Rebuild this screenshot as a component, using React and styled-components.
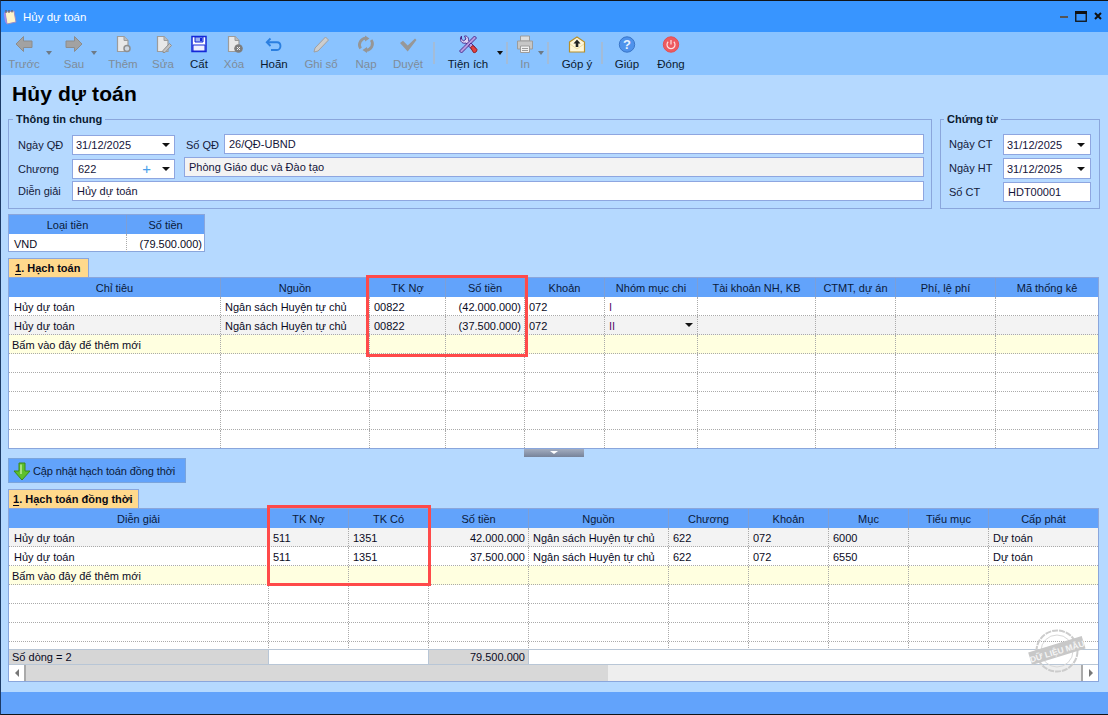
import React from 'react';
import styled, { createGlobalStyle } from 'styled-components';

const Global = createGlobalStyle`
  html, body { margin: 0; padding: 0; }
  body { font-family: "Liberation Sans", Arial, sans-serif; font-size: 11px; color: #0a0a1e; }
  * { box-sizing: border-box; }
`;

const Win = styled.div`
  width: 1108px; height: 715px; display: flex; flex-direction: column; overflow: hidden;
  background: #b5d9ff; border-top: 1px solid #101418; border-bottom: 1px solid #101418;
  border-left: 1px solid #1c3a66; position: relative;
`;
const TitleBar = styled.div`
  height: 31px; background: #3895ff; display: flex; align-items: center; padding-left: 2px; color: #fff; flex: none;
`;
const TitleText = styled.span` margin-left: 6px; font-size: 11.5px; margin-top: 1px; `;
const WinButtons = styled.div`
  margin-left: auto; display: flex; align-items: center; padding-right: 6px; gap: 7px; margin-top: -1px;
`;
const Toolbar = styled.div`
  height: 43px; background: #8ac3ff; display: flex; align-items: flex-start; padding-left: 3px; flex: none;
`;
const ToolBtn = styled.div`
  width: ${p => p.$w}px; margin-left: ${p => p.$ml || 0}px; flex: none; display: flex; flex-direction: column; align-items: center;
  padding-top: 3px; color: ${p => p.$off ? '#7f8c99' : '#0a1a30'}; white-space: nowrap;
`;
const ToolIcon = styled.div` width: 20px; height: 19px; display: flex; align-items: center; justify-content: center; `;
const ToolLabel = styled.div` font-size: 11.5px; line-height: 14px; margin-top: 3px; `;
const Caret = styled.div`
  flex: none; width: ${p => p.$w}px; margin-left: ${p => p.$ml || 0}px; height: 43px; display: flex; justify-content: center; padding-top: 19px;
  &::after { content: ""; width: 0; height: 0; border-left: 3.5px solid transparent; border-right: 3.5px solid transparent;
    border-top: 4px solid ${p => p.$off ? '#6e7a86' : '#111'}; }
`;
const Sep = styled.div`
  flex: none; width: 2px; height: 22px; margin-top: 10px; margin-left: ${p => p.$ml || 0}px; background: #a3bcd8;
`;
const Content = styled.div`
  flex: 1; display: flex; flex-direction: column; padding: 0 8px 0 7px; position: relative;
`;
const PageTitle = styled.h1`
  margin: 8px 0 0 4px; height: 29px; font-size: 21px; line-height: 22px; font-weight: 700; color: #000; letter-spacing: 0.1px;
`;
const Groups = styled.div` display: flex; gap: 8px; height: 97px; `;
const Group = styled.fieldset`
  margin: 0; padding: 8px 7px 0 ${p => p.$pl}px; border: 1px solid #8aa6dc; min-width: 0; height: 97px;
  ${p => p.$w ? `width:${p.$w}px; flex:none;` : 'flex:1;'}
  display: flex; flex-direction: column; gap: ${p => p.$gap}px;
`;
const Legend = styled.legend`
  margin-left: -5px; padding: 0 3px; font-weight: 700; font-size: 11px; line-height: 14px; color: #0a1a30;
`;
const FormRow = styled.div` display: flex; align-items: flex-start; `;
const FieldLabel = styled.label`
  width: ${p => p.$w}px; margin-left: ${p => p.$ml || 0}px; flex: none; height: 20px; line-height: 20px; margin-top: ${p => p.$top || 0}px; color: #14203a;
`;
const Input = styled.div`
  ${p => p.$w ? `width:${p.$w}px; flex:none;` : 'flex:1;'} height: ${p => p.$h || 20}px; margin-top: ${p => p.$top || 0}px;
  margin-left: ${p => p.$ml || 0}px;
  background: ${p => p.$muted ? '#f3f3f3' : '#fff'}; border: 1px solid #8ea6e0; display: flex; align-items: center;
  padding: 0 3px 0 ${p => p.$pl || 3}px; color: #14143a; line-height: 16px;
`;
const ArrowDown = styled.span`
  width: 0; height: 0; margin-left: ${p => p.$auto ? 'auto' : '0'}; margin-right: ${p => p.$mr || 0}px; border-left: 4px solid transparent; border-right: 4px solid transparent; border-top: 4px solid #111; flex: none;
`;
const Plus = styled.span` margin-left: auto; margin-right: 11px; color: #4aa0ea; font-size: 15px; line-height: 16px; `;

const Money = styled.div` width: 197px; margin-top: 5px; border: 1px solid #8aa6dc; flex: none; `;
const Tab = styled.div`
  align-self: flex-start; margin-top: ${p => p.$mt}px; height: ${p => p.$h}px; padding: 0 ${p => p.$pr}px 0 ${p => p.$pl}px; background: #ffd98c; border: 1px solid #8aa6dc; border-bottom: none;
  font-weight: 700; line-height: 19px; color: #0a0a14; flex: none;
  u { text-underline-offset: 2px; }
`;
const GridWrap = styled.div` margin-right: 1px; position: relative; flex: none; `;
const GridBox = styled.div` border: 1px solid #8aa6dc; background: #fff; `;
const HeadRow = styled.div` display: grid; grid-template-columns: ${p => p.$cols}; height: 19px; background: #62a3fb; `;
const HeadCell = styled.div`
  text-align: center; line-height: 20px; color: #0a1a3a; border-right: 1px solid #7d9fd6; &:last-child { border-right: none; }
`;
const Body = styled.div` height: ${p => p.$h}px; overflow: hidden; `;
const Row = styled.div`
  display: grid; grid-template-columns: ${p => p.$cols}; height: ${p => p.$h || 19}px; background: ${p => p.$bg || '#fff'};
  border-bottom: ${p => p.$flat ? 'none' : '1px dotted #aaa'};
`;
const Cell = styled.div`
  border-right: 1px dotted #aaa; padding: 0 ${p => p.$right ? (p.$pr ?? 3) : 0}px 0 ${p => p.$right ? 0 : (p.$pl ?? 4)}px;
  line-height: 20px; height: 18px; white-space: nowrap; color: ${p => p.$purple ? '#5a0f6e' : '#0a0a1e'}; display: flex; justify-content: ${p => p.$right ? 'flex-end' : 'flex-start'};
  &:last-child { border-right: none; }
`;
const DropBox = styled.div`
  margin-left: auto; width: 17px; height: 18px; background: #f0f0f0; display: flex; align-items: center; justify-content: center;
`;
const Highlight = styled.div`
  position: absolute; left: ${p => p.$l}px; top: ${p => p.$t}px; width: ${p => p.$w}px; height: ${p => p.$h}px; border: 3px solid #ff4a4a; pointer-events: none;
`;
const Splitter = styled.div`
  margin-left: 516px; width: 60px; height: 8px; flex: none; background: linear-gradient(#a3adc0, #77839a); display: flex; justify-content: center; padding-top: 2px;
  &::after { content: ""; width: 0; height: 0; border-left: 4px solid transparent; border-right: 4px solid transparent; border-top: 3px solid #fff; }
`;
const UpdateBtn = styled.div`
  margin-top: 1px; width: 178px; height: 25px; background: #62a3fb; border: 1px solid #7aa4dc; flex: none; display: flex; align-items: center; padding-left: 3px; gap: 1px; color: #0a1a3a; white-space: nowrap; letter-spacing: -0.12px;
`;
const FootRow = styled.div`
  display: grid; grid-template-columns: 260px 160px 100px 1fr; height: 16px; border-top: 1px solid #b8c6d6; border-bottom: 1px solid #b8c6d6;
`;
const FootCell = styled.div`
  background: ${p => p.$gray ? '#d6d6d6' : '#fff'}; line-height: 14px; padding: 0 ${p => p.$right ? 3 : 0}px 0 ${p => p.$right ? 0 : 3}px; text-align: ${p => p.$right ? 'right' : 'left'};
  border-right: 1px solid #b8c6d6; color: #0a0a1e; &:last-child { border-right: none; }
`;
const ScrollBar = styled.div` display: flex; height: 16px; background: #eee; `;
const ScrollEnd = styled.div`
  width: 17px; flex: none; background: #fff; border: 1px solid #aaa; border-width: ${p => p.$dir === 'l' ? '0 2px 0 0' : '0 0 0 2px'}; display: flex; align-items: center; justify-content: center;
  &::after { content: ""; width: 0; height: 0; border-top: 4px solid transparent; border-bottom: 4px solid transparent;
    ${p => p.$dir === 'l' ? 'border-right: 4px solid #777;' : 'border-left: 4px solid #777;'} }
  ${p => p.$dir === 'r' ? 'margin-left:auto;' : ''}
`;
const ScrollThumb = styled.div` width: 582px; background: #d8d8d8; flex: none; `;
const Stamp = styled.div` position: absolute; left: 1023px; top: 626px; width: 66px; height: 50px; pointer-events: none; `;
const BottomBar = styled.div` height: 22px; background: #62a3fb; flex: none; margin-top: auto; `;

/* Icons */
const I = ({ children }) => <svg width={20} height={19} viewBox="0 0 20 19" fill="none">{children}</svg>;
const G = '#9c9c9c';
const ArrowL = () => <I><path d="M2 9 L9.5 1.5 V6 H18 V12.5 H9.5 V16.5 Z" fill="#a2a2a2" stroke="#8c8c8c" /></I>;
const ArrowR = () => <I><path d="M18 9 L10.5 1.5 V6 H2 V12.5 H10.5 V16.5 Z" fill="#a2a2a2" stroke="#8c8c8c" /></I>;
const Doc = ({ children }) => <I><path d="M4.5 1.5 H11 L15 5.5 V16.5 H4.5 Z" fill="#e8e8e8" stroke={G} strokeWidth="1.2" /><path d="M11 1.5 V5.5 H15" fill="#bdbdbd" stroke={G} />{children}</I>;
const Add = () => <Doc><circle cx="14" cy="13.5" r="3" fill="#cfd8e2" stroke="#8f8f8f" strokeWidth="1.5" /></Doc>;
const Edit = () => <Doc><path d="M10 15.5 L16.5 8.5 L18.5 10.5 L12 17.5 L10 17.5 Z" fill="#c2c2c2" stroke="#8f8f8f" /></Doc>;
const Del = () => <Doc><circle cx="14.5" cy="13.5" r="4.3" fill="#7e7e7e" /><path d="M13 12 L16 15 M16 12 L13 15" stroke="#eee" /></Doc>;
const Save = () => <I><path d="M3 1.5 H17 V16.5 H3 Z" fill="#fff" stroke="#1428d8" strokeWidth="1.5" /><path d="M6 2 H14 V7 H6 Z" fill="#9ab0f0" stroke="#1428d8" /><path d="M11 3 H13 V6 H11 Z" fill="#1428d8" /><path d="M4 10 H16 V16 H4 Z" fill="#eef0ff" stroke="#1428d8" /></I>;
const Undo = () => <I><path d="M6.5 3.5 L2.8 7.2 L6.5 11 M3 7.2 H13 C17.6 7.2 17.6 15 13 15 H7" stroke="#2b7fe0" strokeWidth="1.9" fill="none" /></I>;
const Pencil = () => <I><path d="M3 17 L4 13 L14.5 2 L17.5 5 L7 16 Z" fill="#cdcdcd" stroke="#a0a0a0" /></I>;
const Refresh = () => <I><path d="M4.6 13.5 C1.5 9 5 3.5 10 3.2 M15.2 5 C18.5 9.5 15 15 10 15.3" stroke="#969696" strokeWidth="2.8" /><path d="M9 0.5 L13.5 3.5 L9 6.5 Z M11 12 L6.5 15 L11 18 Z" fill="#969696" /></I>;
const Check = () => <I><path d="M2 8 L5 5.8 L9.7 10.5 L17 3.5 L18.5 5 L9.7 16.5 Z" fill="#979797" /></I>;
const Tools = () => <I><path d="M3.5 1 L3.5 4 L5.5 6 L8 4 L6.5 1 C9.5 0.5 11 3.5 10.5 5.5 L12 7 L9.5 9.5 L8 8 C5 9 2 7 2.5 3 Z" fill="#ddd2f4" stroke="#4a2e90" /><path d="M16.5 1 L18.5 3 L8 13.5 L3.5 18 L1.5 16 L6 11.5 Z" fill="#b89be0" stroke="#4a2e90" /><path d="M11 10 L13 8 L17.5 12.5 C19 14 17 16.5 15 15.5 L11 11.5 Z" fill="#b89be0" stroke="#4a2e90" /><path d="M12.5 12.5 L15 10.5 L19 14.5 C19 17 17 18 15.5 17.5 Z" fill="#e24040" stroke="#8f1f1f" /></I>;
const Printer = () => <I><path d="M5.5 1 H14.5 V6 H5.5 Z" fill="#dedede" stroke={G} /><path d="M2.5 6 H17.5 V14 H2.5 Z" fill="#c6c6c6" stroke={G} /><path d="M5.5 11 H14.5 V17.5 H5.5 Z" fill="#f0f0f0" stroke={G} /><path d="M7 13.5 H13 M7 15.5 H13" stroke={G} /></I>;
const Mail = () => <I><path d="M2.5 7 L10 2 L17.5 7 V17 H2.5 Z" fill="#fff6d8" stroke="#b8902a" strokeWidth="1.2" /><path d="M10 4.5 L13.5 8.5 H11.3 V12 H8.7 V8.5 H6.5 Z" fill="#222" /><path d="M3 9 L10 14 L17 9" fill="none" stroke="#eedca0" /></I>;
const Help = () => <I><circle cx="10" cy="9.5" r="7.7" fill="#4f93ec" stroke="#3a76c8" /><text x="10" y="14" textAnchor="middle" fontSize="13" fontWeight="700" fill="#e8f2ff" fontFamily="Liberation Sans">?</text></I>;
const Power = () => <I><circle cx="10" cy="9.5" r="7.7" fill="#ee5a5f" stroke="#e25055" /><path d="M7.2 6.8 A4 4 0 1 0 12.8 6.8 M10 5 V9.5" stroke="#ffe2e2" strokeWidth="1.2" /></I>;
const Note = () => <svg width="14" height="16" viewBox="0 0 14 16"><path d="M2 3 L11 2 L13 13 L4 15 Z" fill="#fff4c8" stroke="#9a8cc8" /><path d="M2 3 L4 15 L2 13 L0.8 5 Z" fill="#a48ce8" /><path d="M3 1 V4 M6 1 V4 M9 1 V3.5" stroke="#555" /></svg>;
const GreenDown = () => <svg width="20" height="20" viewBox="0 0 20 20"><path d="M7 2 H13 V10 H18 L10 19 L2 10 H7 Z" fill="#5ec02c" stroke="#3a8a18" /><path d="M9 3.5 V13" stroke="#c4f0a0" strokeWidth="1.4" /></svg>;

const tools = [
  { t: 'Trước', w: 40, ml: 0, off: 1, I: ArrowL },
  { c: 10, off: 1 },
  { t: 'Sau', w: 32, ml: 4, off: 1, I: ArrowR },
  { c: 8, off: 1 },
  { t: 'Thêm', w: 36, ml: 7, off: 1, I: Add },
  { t: 'Sửa', w: 32, ml: 6, off: 1, I: Edit },
  { t: 'Cất', w: 32, ml: 4, I: Save },
  { t: 'Xóa', w: 32, ml: 3, off: 1, I: Del },
  { t: 'Hoãn', w: 36, ml: 6, I: Undo },
  { t: 'Ghi sổ', w: 40, ml: 9, off: 1, I: Pencil },
  { t: 'Nạp', w: 32, ml: 9, off: 1, I: Refresh },
  { t: 'Duyệt', w: 36, ml: 8, off: 1, I: Check },
  { s: 7 },
  { t: 'Tiện ích', w: 50, ml: 8, I: Tools },
  { c: 8, ml: 3 },
  { s: 2 },
  { t: 'In', w: 24, ml: 5, off: 1, I: Printer },
  { c: 7, off: 1 },
  { s: 3 },
  { t: 'Góp ý', w: 40, ml: 8, I: Mail },
  { s: 4 },
  { t: 'Giúp', w: 36, ml: 6, I: Help },
  { t: 'Đóng', w: 36, ml: 8, I: Power },
];

const cols1 = '212px 149px 76px 79px 80px 93px 118px 80px 100px 1fr';
const cols2 = '260px 80px 80px 100px 140px 80px 80px 80px 80px 1fr';

const NEW = 'Bấm vào đây để thêm mới';

const Grid1Rows = [
  ['Hủy dự toán', 'Ngân sách Huyện tự chủ', '00822', '(42.000.000)', '072', 'I'],
  ['Hủy dự toán', 'Ngân sách Huyện tự chủ', '00822', '(37.500.000)', '072', 'II'],
];
const Grid2Rows = [
  ['Hủy dự toán', '511', '1351', '42.000.000', 'Ngân sách Huyện tự chủ', '622', '072', '6000', '', 'Dự toán'],
  ['Hủy dự toán', '511', '1351', '37.500.000', 'Ngân sách Huyện tự chủ', '622', '072', '6550', '', 'Dự toán'],
];
const Empty = ({ cols, n, bg, first }) => (
  <Row $cols={cols} $bg={bg}>
    {Array.from({ length: n }).map((_, i) => <Cell key={i} $pl={3}>{i === 0 ? first : ''}</Cell>)}
  </Row>
);

export default function App() {
  return (
    <>
      <Global />
      <Win>
        <TitleBar>
          <Note />
          <TitleText>Hủy dự toán</TitleText>
          <WinButtons>
            <svg width="8" height="3" viewBox="0 0 8 3"><rect width="8" height="2" y="1" fill="#555" /></svg>
            <svg width="12" height="11" viewBox="0 0 12 11"><rect x=".75" y="1.5" width="10.5" height="8.75" fill="none" stroke="#111" strokeWidth="1.3" /><rect x="0" y="0" width="12" height="3" fill="#111" /></svg>
            <svg width="8" height="8" viewBox="0 0 8 8"><path d="M1 1 L7 7 M7 1 L1 7" stroke="#111" strokeWidth="2" /></svg>
          </WinButtons>
        </TitleBar>
        <Toolbar>
          {tools.map((b, i) => {
            if (b.s) return <Sep key={i} $ml={b.s} />;
            if (b.c) return <Caret key={i} $w={b.c} $ml={b.ml} $off={b.off} />;
            const Ico = b.I;
            return (
              <ToolBtn key={i} $w={b.w} $ml={b.ml} $off={b.off}>
                <ToolIcon><Ico /></ToolIcon>
                <ToolLabel>{b.t}</ToolLabel>
              </ToolBtn>
            );
          })}
        </Toolbar>
        <Content>
          <PageTitle>Hủy dự toán</PageTitle>
          <Groups>
            <Group $gap={2} $pl={9}>
              <Legend>Thông tin chung</Legend>
              <FormRow>
                <FieldLabel $w={54} $top={1}>Ngày QĐ</FieldLabel>
                <Input $w={103} $top={1}>31/12/2025<ArrowDown $auto $mr={1} /></Input>
                <FieldLabel $w={38} $ml={11} $top={1}>Số QĐ</FieldLabel>
                <Input $pl={4}>26/QĐ-UBND</Input>
              </FormRow>
              <FormRow>
                <FieldLabel $w={54} $top={2}>Chương</FieldLabel>
                <Input $w={103} $top={2} $pl={5}>622<Plus>+</Plus><ArrowDown $mr={1} /></Input>
                <Input $ml={9} $muted $pl={4}>Phòng Giáo dục và Đào tạo</Input>
              </FormRow>
              <FormRow>
                <FieldLabel $w={54}>Diễn giải</FieldLabel>
                <Input $pl={4}>Hủy dự toán</Input>
              </FormRow>
            </Group>
            <Group $w={160} $gap={3} $pl={8}>
              <Legend>Chứng từ</Legend>
              <FormRow>
                <FieldLabel $w={54}>Ngày CT</FieldLabel>
                <Input $w={88} $h={21}>31/12/2025<ArrowDown $auto $mr={2} /></Input>
              </FormRow>
              <FormRow>
                <FieldLabel $w={54}>Ngày HT</FieldLabel>
                <Input $w={88} $h={21}>31/12/2025<ArrowDown $auto $mr={2} /></Input>
              </FormRow>
              <FormRow>
                <FieldLabel $w={54}>Số CT</FieldLabel>
                <Input $w={88} $pl={4}>HDT00001</Input>
              </FormRow>
            </Group>
          </Groups>
          <Money>
            <HeadRow $cols="118px 1fr"><HeadCell>Loại tiền</HeadCell><HeadCell>Số tiền</HeadCell></HeadRow>
            <Row $cols="118px 1fr" $flat $h={17}>
              <Cell $pl={5}>VND</Cell><Cell $right $pr={2}>(79.500.000)</Cell>
            </Row>
          </Money>
          <Tab $mt={6} $h={19} $pl={6} $pr={8}><u>1</u>. Hạch toán</Tab>
          <GridWrap>
            <GridBox>
              <HeadRow $cols={cols1}>
                {['Chỉ tiêu', 'Nguồn', 'TK Nợ', 'Số tiền', 'Khoản', 'Nhóm mục chi', 'Tài khoản NH, KB', 'CTMT, dự án', 'Phí, lệ phí', 'Mã thống kê'].map(h => <HeadCell key={h}>{h}</HeadCell>)}
              </HeadRow>
              <Body $h={151}>
                {Grid1Rows.map((r, i) => (
                  <Row key={i} $cols={cols1} $bg={i === 1 ? '#f3f3f3' : '#fff'}>
                    <Cell $pl={5}>{r[0]}</Cell><Cell>{r[1]}</Cell><Cell>{r[2]}</Cell><Cell $right>{r[3]}</Cell><Cell>{r[4]}</Cell>
                    <Cell $purple>{r[5]}{i === 1 && <DropBox><ArrowDown /></DropBox>}</Cell>
                    <Cell /><Cell /><Cell /><Cell />
                  </Row>
                ))}
                <Empty cols={cols1} n={10} bg="#ffffe0" first={NEW} />
                {[0, 1, 2, 3, 4].map(i => <Empty key={i} cols={cols1} n={10} />)}
              </Body>
            </GridBox>
            <Highlight $l={358} $t={-2} $w={162} $h={82} />
          </GridWrap>
          <Splitter />
          <UpdateBtn><GreenDown />Cập nhật hạch toán đồng thời</UpdateBtn>
          <Tab $mt={6} $h={19} $pl={4} $pr={5}><u>1</u>. Hạch toán đồng thời</Tab>
          <GridWrap>
            <GridBox>
              <HeadRow $cols={cols2}>
                {['Diễn giải', 'TK Nợ', 'TK Có', 'Số tiền', 'Nguồn', 'Chương', 'Khoản', 'Mục', 'Tiểu mục', 'Cấp phát'].map(h => <HeadCell key={h}>{h}</HeadCell>)}
              </HeadRow>
              <Body $h={121}>
                {Grid2Rows.map((r, i) => (
                  <Row key={i} $cols={cols2} $bg={i === 0 ? '#f3f3f3' : '#fff'}>
                    {r.map((c, j) => <Cell key={j} $right={j === 3} $pl={j === 0 ? 5 : undefined}>{c}</Cell>)}
                  </Row>
                ))}
                <Empty cols={cols2} n={10} bg="#ffffe0" first={NEW} />
                {[0, 1, 2, 3].map(i => <Empty key={i} cols={cols2} n={10} />)}
              </Body>
              <FootRow>
                <FootCell $gray>Số dòng = 2</FootCell>
                <FootCell />
                <FootCell $gray $right>79.500.000</FootCell>
                <FootCell />
              </FootRow>
              <ScrollBar>
                <ScrollEnd $dir="l" />
                <ScrollThumb />
                <ScrollEnd $dir="r" />
              </ScrollBar>
            </GridBox>
            <Highlight $l={259} $t={-3} $w={164} $h={81} />
          </GridWrap>
        </Content>
        <BottomBar />
        <Stamp>
          <svg width="66" height="50" viewBox="0 0 66 50">
            <circle cx="33" cy="24" r="20.5" fill="none" stroke="#cccccc" strokeWidth="2" strokeDasharray="6 1" />
            <circle cx="33" cy="24" r="16" fill="none" stroke="#d8d8d8" strokeWidth="1" />
            <g transform="rotate(-17 33 24)">
              <rect x="5" y="17" width="56" height="13" fill="#c8c8c8" />
              <text x="33" y="27.5" textAnchor="middle" fontSize="8.5" fontWeight="700" fill="#f4f4f4" fontFamily="Liberation Sans">DỮ LIỆU MẪU</text>
            </g>
          </svg>
        </Stamp>
      </Win>
    </>
  );
}
